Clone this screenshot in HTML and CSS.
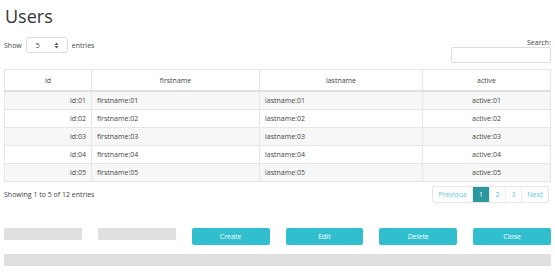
FILE: index.html
```
<!DOCTYPE html>
<html lang="en">
<head>
  <meta charset="UTF-8">
  <title>Users</title>
  <link rel="stylesheet" href="styles.css">
</head>
<body>
  <div class="page">
    <h1>Users</h1>

    <div class="controls">
      <div class="length">
        <span>Show</span>
        <div class="select">
          <span>5</span>
          <svg width="5" height="7" viewBox="0 0 5 7"><path d="M0.5 3 L2.5 0.5 L4.5 3 Z M0.5 4 L2.5 6.5 L4.5 4 Z" fill="#555"/></svg>
        </div>
        <span>entries</span>
      </div>
      <div class="search">
        <label for="search">Search:</label>
        <input type="text" id="search">
      </div>
    </div>

    <table class="users">
      <colgroup>
        <col style="width: 87px">
        <col style="width: 168px">
        <col style="width: 163px">
        <col>
      </colgroup>
      <thead>
        <tr><th>id</th><th>firstname</th><th>lastname</th><th>active</th></tr>
      </thead>
      <tbody>
        <tr><td class="num">id:01</td><td>firstname:01</td><td>lastname:01</td><td class="mid">active:01</td></tr>
        <tr><td class="num">id:02</td><td>firstname:02</td><td>lastname:02</td><td class="mid">active:02</td></tr>
        <tr><td class="num">id:03</td><td>firstname:03</td><td>lastname:03</td><td class="mid">active:03</td></tr>
        <tr><td class="num">id:04</td><td>firstname:04</td><td>lastname:04</td><td class="mid">active:04</td></tr>
        <tr><td class="num">id:05</td><td>firstname:05</td><td>lastname:05</td><td class="mid">active:05</td></tr>
      </tbody>
    </table>

    <div class="info">
      <span>Showing 1 to 5 of 12 entries</span>
      <div class="pager">
        <a class="prev">Previous</a>
        <a class="current">1</a>
        <a>2</a>
        <a>3</a>
        <a class="next">Next</a>
      </div>
    </div>

    <div class="actions">
      <div class="placeholder"></div>
      <div class="placeholder"></div>
      <button>Create</button>
      <button>Edit</button>
      <button>Delete</button>
      <button>Close</button>
    </div>

    <div class="bar"></div>
  </div>
</body>
</html>
```

FILE: styles.css
```
body {
  margin: 0;
  font-family: "Open Sans", sans-serif;
  color: #444;
  background: #fff;
}

.page {
  padding: 0 4px;
  width: 547px;
}

h1 {
  margin: 4px 0 0 1px;
  font-size: 18px;
  font-weight: 400;
  line-height: 24px;
  color: #333;
}

.controls {
  display: flex;
  justify-content: space-between;
  margin-top: 9px;
  font-size: 7px;
}

.length {
  display: flex;
  align-items: center;
  gap: 4px;
  height: 16px;
}

.select {
  display: flex;
  justify-content: space-between;
  align-items: center;
  box-sizing: border-box;
  width: 42px;
  height: 16px;
  padding: 0 8px 0 9px;
  border: 1px solid #ddd;
  border-radius: 3px;
}

.search {
  display: flex;
  flex-direction: column;
  align-items: flex-end;
  margin-top: 2px;
}

.search label {
  line-height: 8px;
}

.search input {
  box-sizing: border-box;
  width: 100px;
  height: 16px;
  margin: 0;
  border: 1px solid #ddd;
  border-radius: 2px;
}

.users {
  width: 547px;
  margin-top: 6px;
  border-collapse: collapse;
  table-layout: fixed;
  font-size: 7px;
}

.users th {
  height: 18px;
  font-weight: 400;
  border: 1px solid #e6e6e6;
  border-bottom: 2px solid #e0e0e0;
}

.users td {
  height: 17px;
  padding: 0 5px;
  border: 1px solid #e6e6e6;
}

.users tbody tr:nth-child(odd) {
  background: #f7f7f7;
}

.users .num {
  text-align: right;
}

.users .mid {
  text-align: center;
}

.info {
  display: flex;
  justify-content: space-between;
  align-items: center;
  margin-top: 4px;
  font-size: 7px;
}

.pager {
  display: flex;
  margin-right: 2px;
  border: 1px solid #e6e6e6;
  border-radius: 2px;
}

.pager a {
  box-sizing: border-box;
  width: 16px;
  text-align: center;
  line-height: 15px;
  color: #5ccad4;
  border-left: 1px solid #eee;
}

.pager .prev {
  width: 39px;
  border-left: none;
}

.pager .next {
  width: 27px;
}

.pager .current {
  width: 17px;
  color: #fff;
  background: #2a989e;
}

.actions {
  display: grid;
  grid-template-columns: repeat(6, 1fr);
  column-gap: 16px;
  margin-top: 25px;
}

.placeholder {
  height: 12px;
  background: #e0e0e0;
}

.actions button {
  height: 17px;
  padding: 0;
  font-family: "Open Sans", sans-serif;
  font-size: 7px;
  color: #fff;
  background: #31bfd0;
  border: none;
  border-radius: 2px;
}

.bar {
  height: 12px;
  margin-top: 9px;
  background: #e0e0e0;
}
```
